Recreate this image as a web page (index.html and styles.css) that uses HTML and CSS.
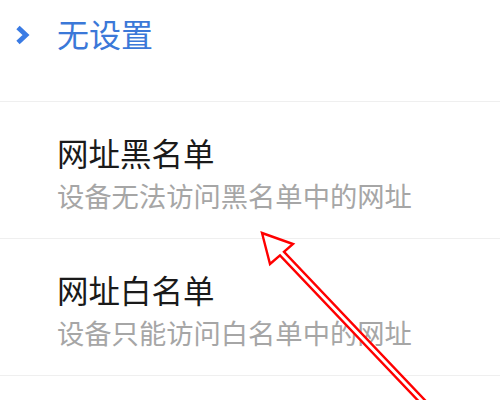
FILE: index.html
```html
<!DOCTYPE html>
<html lang="zh-CN">
<head>
<meta charset="utf-8">
<link rel="stylesheet" href="styles.css">
</head>
<body>
<div class="page">
  <div class="row-mode">
    <svg class="chevron" width="20" height="30" viewBox="0 0 20 30">
      <polyline points="6,7.5 14,15 6,22.5" fill="none" stroke="#3a7be4" stroke-width="4.8" stroke-linecap="butt" stroke-linejoin="miter"/>
    </svg>
    <span class="mode-text">无设置</span>
  </div>
  <div class="item">
    <div class="title">网址黑名单</div>
    <div class="desc">设备无法访问黑名单中的网址</div>
  </div>
  <div class="item">
    <div class="title">网址白名单</div>
    <div class="desc">设备只能访问白名单中的网址</div>
  </div>
  <div class="item"></div>
  <svg class="annot" width="500" height="400" viewBox="0 0 500 400">
    <polygon points="262,233 293,244 284,251.8 443.8,420 436.5,420 280,255.3 270,264" fill="#ffffff" stroke="#ff0000" stroke-width="2.4" stroke-linejoin="miter"/>
  </svg>
</div>
</body>
</html>
```
FILE: styles.css
```css
html, body {
  margin: 0;
  padding: 0;
  background: #ffffff;
}
body {
  width: 500px;
  height: 400px;
  overflow: hidden;
  font-family: "Noto Sans CJK SC", "Noto Sans", sans-serif;
}
.page {
  position: relative;
  width: 500px;
  height: 400px;
  overflow: hidden;
}
.row-mode {
  box-sizing: border-box;
  height: 102px;
  padding: 13px 0 0 12px;
  display: flex;
  align-items: flex-start;
  border-bottom: 1px solid #efefef;
}
.chevron {
  margin-top: 7px;
  flex: none;
}
.mode-text {
  margin-left: 25px;
  font-size: 32px;
  line-height: 40px;
  color: #3b78d8;
}
.item {
  box-sizing: border-box;
  height: 137px;
  padding: 30px 0 0 57px;
  border-bottom: 1px solid #efefef;
}
.title {
  font-size: 31.5px;
  line-height: 40px;
  color: #1a1a1a;
}
.desc {
  margin-top: 5px;
  font-size: 27.3px;
  line-height: 36px;
  color: #a6a6a6;
}
.annot {
  position: absolute;
  left: 0;
  top: 0;
  pointer-events: none;
}
```
